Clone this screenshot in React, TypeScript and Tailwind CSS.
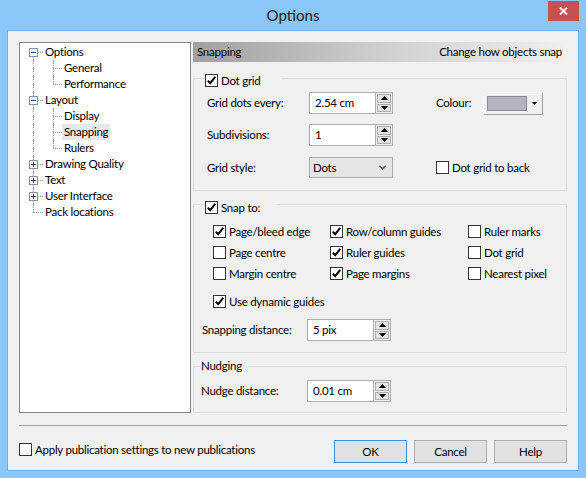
import React from 'react';

type TreeItem = {
  label: string;
  level: 0 | 1;
  box?: 'plus' | 'minus';
  first?: boolean;
  last?: boolean;
  lastChild?: boolean;
  selected?: boolean;
};

const TREE: TreeItem[] = [
  { label: 'Options', level: 0, box: 'minus', first: true },
  { label: 'General', level: 1 },
  { label: 'Performance', level: 1, lastChild: true },
  { label: 'Layout', level: 0, box: 'minus' },
  { label: 'Display', level: 1 },
  { label: 'Snapping', level: 1, selected: true },
  { label: 'Rulers', level: 1, lastChild: true },
  { label: 'Drawing Quality', level: 0, box: 'plus' },
  { label: 'Text', level: 0, box: 'plus' },
  { label: 'User Interface', level: 0, box: 'plus' },
  { label: 'Pack locations', level: 0, last: true },
];

const SNAP_ROWS: [string, boolean][][] = [
  [
    ['Page/bleed edge', true],
    ['Row/column guides', true],
    ['Ruler marks', false],
  ],
  [
    ['Page centre', false],
    ['Ruler guides', true],
    ['Dot grid', false],
  ],
  [
    ['Margin centre', false],
    ['Page margins', true],
    ['Nearest pixel', false],
  ],
];

function Check({ checked }: { checked?: boolean }) {
  return (
    <span className="flex h-[13px] w-[13px] shrink-0 items-center justify-center border border-[#333333] bg-white">
      {checked && (
        <svg width="11" height="11" viewBox="0 0 11 11">
          <path d="M1.8 5.6l2.4 2.6 5-6.4" fill="none" stroke="#000" strokeWidth="2" />
        </svg>
      )}
    </span>
  );
}

function CheckLabel({ label, checked }: { label: string; checked?: boolean }) {
  return (
    <div className="flex items-center gap-[3px] leading-[15px]">
      <Check checked={checked} />
      <span>{label}</span>
    </div>
  );
}

function Arrow({ up }: { up?: boolean }) {
  return (
    <svg width="7" height="4" viewBox="0 0 7 4">
      <path d={up ? 'M0 4h7L3.5 0z' : 'M0 0h7L3.5 4z'} fill="#000" />
    </svg>
  );
}

function Spin({ value }: { value: string }) {
  return (
    <div className="flex h-[22px] w-[84px] border border-[#abadb3] bg-white">
      <div className="flex flex-1 items-center pl-[5px]">{value}</div>
      <div className="flex w-[17px] flex-col gap-[1px] border-l border-[#abadb3] bg-[#f0f0f0] p-[1px]">
        <div className="flex flex-1 items-center justify-center border border-[#acacac] bg-[#e5e5e5]">
          <Arrow up />
        </div>
        <div className="flex flex-1 items-center justify-center border border-[#acacac] bg-[#e5e5e5]">
          <Arrow />
        </div>
      </div>
    </div>
  );
}

function Gutter({
  vTop,
  vBottom,
  hRight,
  box,
  lineAt,
}: {
  vTop?: boolean;
  vBottom?: boolean;
  hRight?: boolean;
  box?: 'plus' | 'minus';
  lineAt: 'a' | 'b';
}) {
  const left = lineAt === 'a' ? 'left-[9px]' : 'left-[10px]';
  return (
    <div className="relative h-[16px] w-[19px] shrink-0">
      {vTop && <span className={`absolute top-0 h-[8px] border-l border-dotted border-[#a0a0a0] ${left}`} />}
      {vBottom && <span className={`absolute top-[8px] bottom-0 border-l border-dotted border-[#a0a0a0] ${left}`} />}
      {hRight && <span className={`absolute top-[8px] right-0 border-t border-dotted border-[#a0a0a0] ${left}`} />}
      {box && (
        <span className="absolute top-[4px] left-[5px] flex h-[9px] w-[9px] items-center justify-center border border-[#919191] bg-white">
          <svg width="5" height="5" viewBox="0 0 5 5">
            <path d="M0 2.5h5" stroke="#1e3c78" strokeWidth="1" />
            {box === 'plus' && <path d="M2.5 0v5" stroke="#1e3c78" strokeWidth="1" />}
          </svg>
        </span>
      )}
    </div>
  );
}

function Tree() {
  return (
    <div className="h-[371px] w-[172px] shrink-0 border border-[#828790] bg-white pt-[1px] pl-[4px]">
      {TREE.map((t) => (
        <div key={t.label} className="flex h-[16px] items-center">
          {t.level === 0 ? (
            <Gutter lineAt="a" vTop={!t.first} vBottom={!t.last} hRight box={t.box} />
          ) : (
            <>
              <Gutter lineAt="a" vTop vBottom />
              <Gutter lineAt="b" vTop vBottom={!t.lastChild} hRight />
            </>
          )}
          <span className={`pl-[2px] pr-[2px] leading-[16px] ${t.selected ? 'bg-[#e8e8e8]' : ''}`}>
            {t.label}
          </span>
        </div>
      ))}
    </div>
  );
}

function ColourButton() {
  return (
    <div className="flex h-[23px] w-[60px] items-center border border-t-white border-l-white border-r-[#a0a0a0] border-b-[#a0a0a0] bg-[#f0f0f0] pl-[3px] pr-[5px]">
      <span className="h-[15px] w-[40px] border border-[#8a8a94] bg-[#b4b4c0]" />
      <span className="ml-auto flex">
        <svg width="5" height="3" viewBox="0 0 5 3">
          <path d="M0 0h5L2.5 3z" fill="#000" />
        </svg>
      </span>
    </div>
  );
}

function Select({ value }: { value: string }) {
  return (
    <div className="flex h-[21px] w-[84px] items-center justify-between border border-[#acacac] bg-[#e5e5e5] pl-[3px] pr-[6px]">
      <span>{value}</span>
      <svg width="7" height="5" viewBox="0 0 7 5">
        <path d="M0.5 0.8L3.5 3.8 6.5 0.8" fill="none" stroke="#606060" strokeWidth="1.6" />
      </svg>
    </div>
  );
}

function SettingsPanel() {
  return (
    <div className="ml-[2px] flex w-[374px] flex-col">
      <div className="flex h-[20px] items-center justify-between bg-gradient-to-r from-[#a0a0a0] via-[#cfcfcf] to-[#f0f0f0] pl-[4px] pr-[5px]">
        <span>Snapping</span>
        <span>Change how objects snap</span>
      </div>

      <fieldset className="mt-[6px] border border-[#dcdcdc]">
        <legend className="ml-[11px] flex h-[20px] w-[77px] items-end">
          <CheckLabel label="Dot grid" checked />
        </legend>
        <div className="flex flex-col pt-[4px] pb-[12px] pl-[13px]">
          <div className="flex h-[22px] items-center">
            <span className="w-[102px]">Grid dots every:</span>
            <Spin value="2.54 cm" />
            <span className="ml-[43px] w-[47px]">Colour:</span>
            <ColourButton />
          </div>
          <div className="mt-[10px] flex h-[22px] items-center">
            <span className="w-[102px]">Subdivisions:</span>
            <Spin value="1" />
          </div>
          <div className="mt-[11px] flex h-[21px] items-center">
            <span className="w-[102px]">Grid style:</span>
            <Select value="Dots" />
            <span className="ml-[43px]">
              <CheckLabel label="Dot grid to back" />
            </span>
          </div>
        </div>
      </fieldset>

      <fieldset className="mt-[2px] border border-[#dcdcdc]">
        <legend className="ml-[11px] flex h-[22px] w-[72px] items-end">
          <CheckLabel label="Snap to:" checked />
        </legend>
        <div className="flex flex-col pt-[5px] pb-[11px]">
          <div className="ml-[19px] grid grid-cols-[117px_138px_auto] grid-rows-[22px_21px_21px]">
            {SNAP_ROWS.flat().map(([label, checked]) => (
              <div key={label} className="flex items-center">
                <CheckLabel label={label} checked={checked} />
              </div>
            ))}
          </div>
          <div className="mt-[7px] ml-[19px] flex h-[21px] items-center">
            <CheckLabel label="Use dynamic guides" checked />
          </div>
          <div className="mt-[7px] ml-[8px] flex h-[22px] items-center">
            <span className="w-[105px]">Snapping distance:</span>
            <Spin value="5 pix" />
          </div>
        </div>
      </fieldset>

      <fieldset className="mt-[5px] border border-[#dcdcdc]">
        <legend className="ml-[6px] flex h-[16px] items-center px-[1px]">Nudging</legend>
        <div className="mt-[6px] mb-[10px] ml-[7px] flex h-[22px] items-center">
          <span className="w-[106px]">Nudge distance:</span>
          <Spin value="0.01 cm" />
        </div>
      </fieldset>
    </div>
  );
}

function DialogButton({ label, primary }: { label: string; primary?: boolean }) {
  return (
    <button
      className={`flex h-[23px] w-[73px] items-center justify-center border bg-[#e1e1e1] ${
        primary ? 'border-[#3c8fdd]' : 'border-[#adadad]'
      }`}
    >
      {label}
    </button>
  );
}

export default function App() {
  return (
    <div className="flex h-[478px] w-[586px] flex-col bg-[#8ac6f7] font-['Lato','Noto_Sans',sans-serif] text-[11.5px] tracking-[-0.25px] text-black">
      {/* Title bar */}
      <div className="relative flex h-[30px] shrink-0 items-center justify-center">
        <span className="text-[15px] leading-none tracking-normal text-[#1b1b1b]">Options</span>
        <div className="absolute top-[1px] right-[7px] flex h-[20px] w-[31px] items-center justify-center bg-[#c75050]">
          <svg width="9" height="8" viewBox="0 0 9 8">
            <path d="M1 0.5l7 7M8 0.5l-7 7" stroke="#fff" strokeWidth="1.8" />
          </svg>
        </div>
      </div>

      {/* Client area */}
      <div className="mx-[7px] mb-[7px] flex flex-1 flex-col border border-[#76aee3] bg-[#f0f0f0] px-[11px] pt-[11px]">
        <div className="flex">
          <Tree />
          <SettingsPanel />
        </div>

        <div className="mt-[12px] h-px bg-[#a0a0a0]" />

        <div className="mt-[14px] flex items-start justify-between">
          <div className="mt-[2px]">
            <CheckLabel label="Apply publication settings to new publications" />
          </div>
          <div className="flex gap-[7px]">
            <DialogButton label="OK" primary />
            <DialogButton label="Cancel" />
            <DialogButton label="Help" />
          </div>
        </div>
      </div>
    </div>
  );
}
